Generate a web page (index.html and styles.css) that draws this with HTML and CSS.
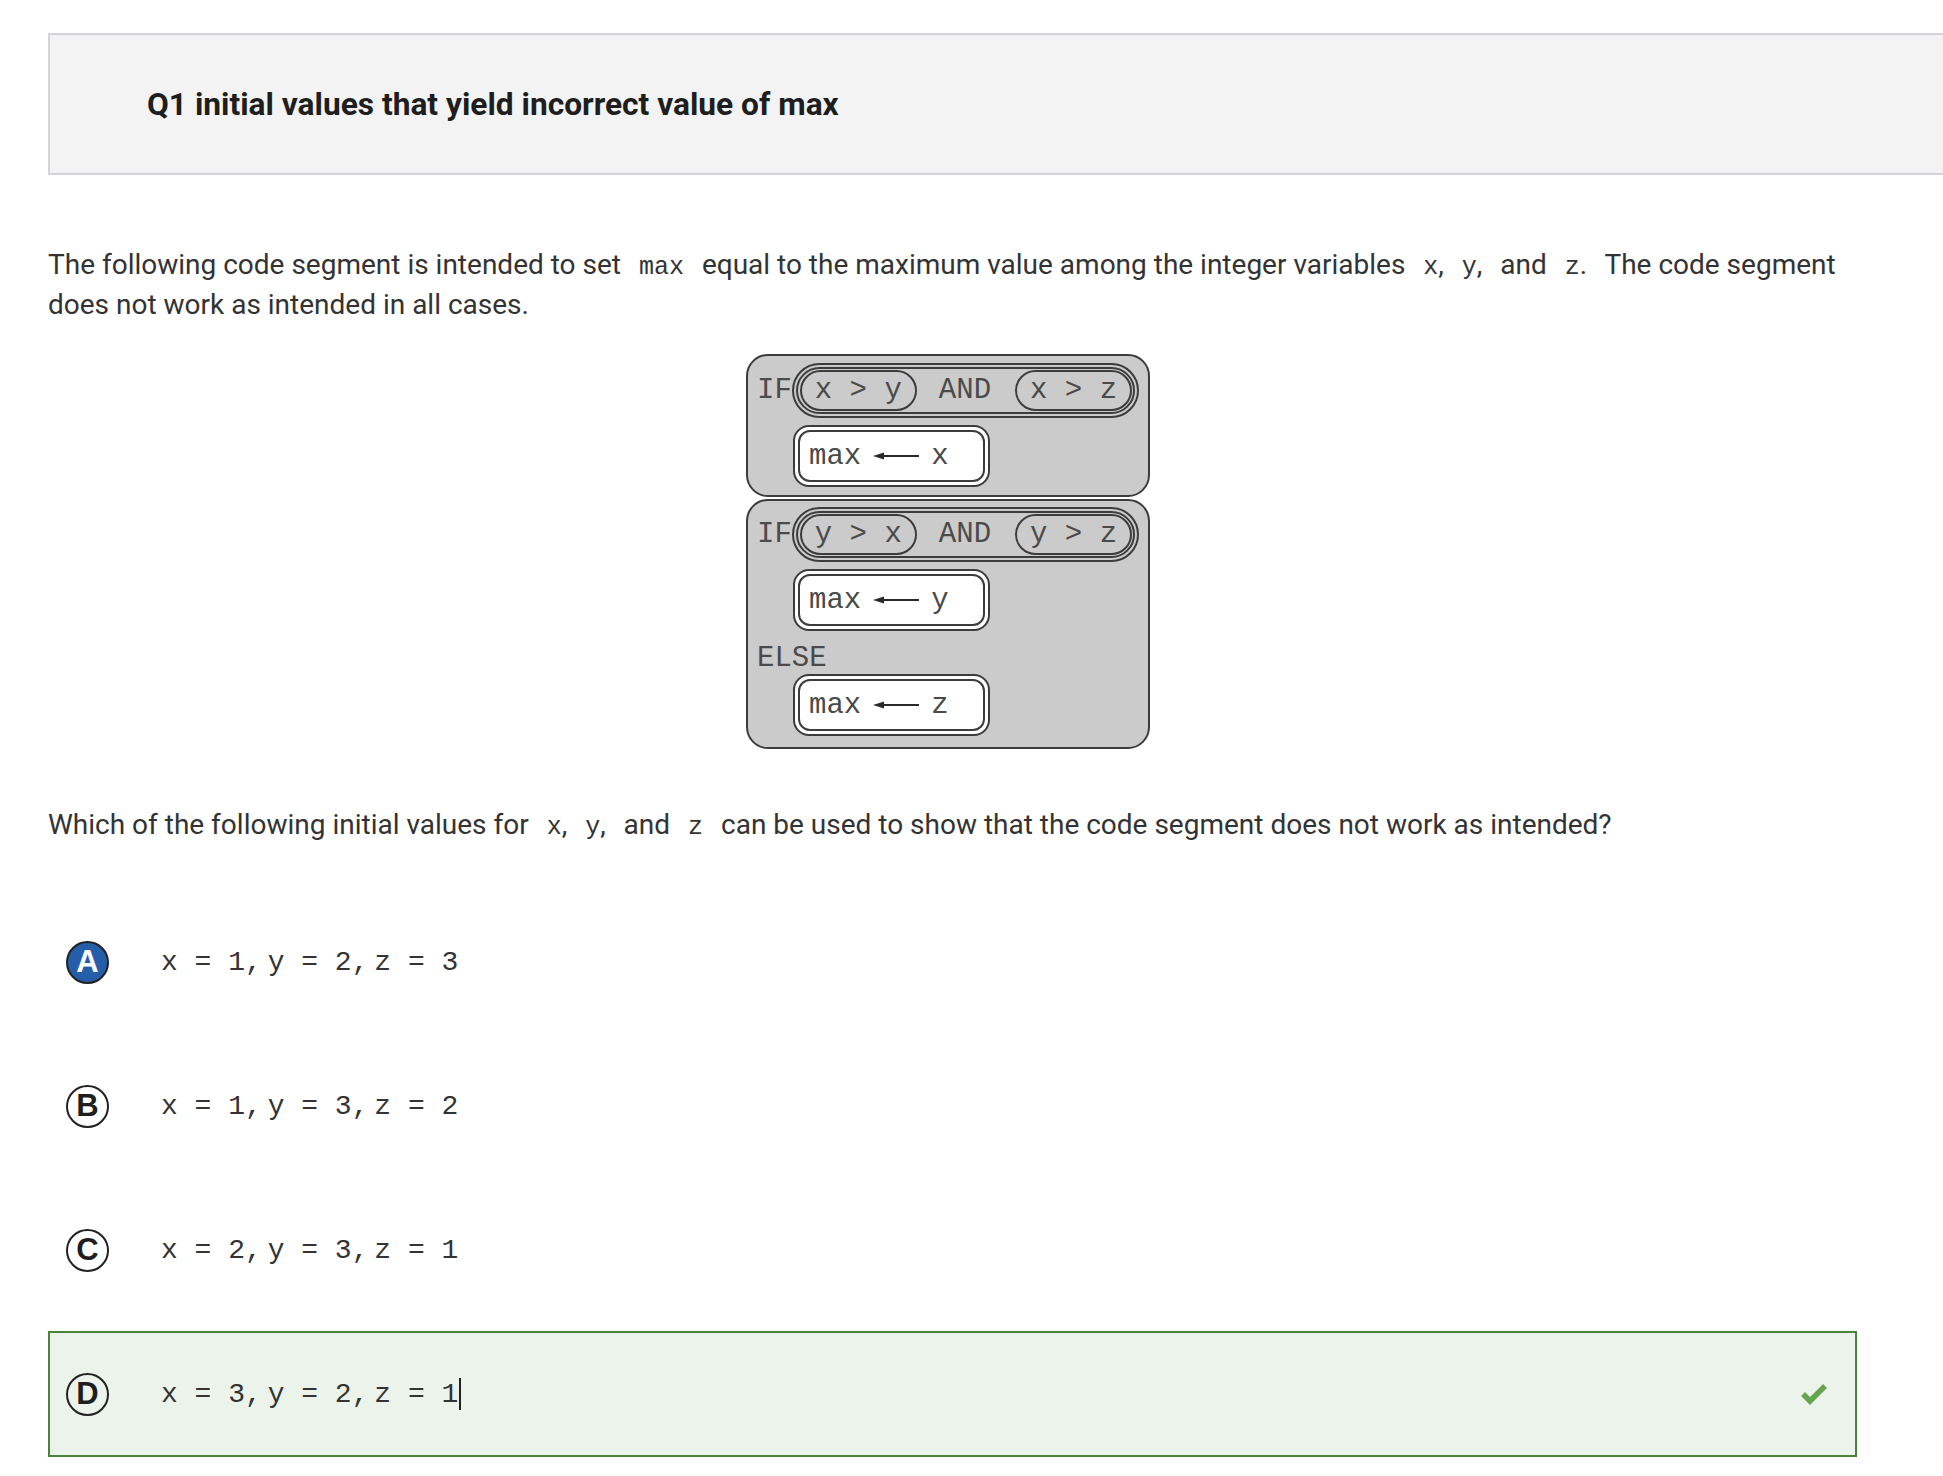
FILE: index.html
```html
<!DOCTYPE html>
<html>
<head>
<meta charset="utf-8">
<link rel="stylesheet" href="styles.css">
</head>
<body>
<header class="qhead">
  <h1 class="qtitle">Q1 initial values that yield incorrect value of max</h1>
</header>
<main class="content">
  <p class="para">The following code segment is intended to set <code class="code pr">max</code> equal to the maximum value among the integer variables <code class="code">x</code>, <code class="code">y</code>,<span class="gap"></span> and <code class="code">z</code>.<span class="gap"></span> The code segment does not work as intended in all cases.</p>

  <div class="diagram">
    <div class="dblock b1">
      <div class="ifrow">
        <span class="kw">IF</span>
        <div class="cond"><div class="cond-in">
          <span class="cmp">x &gt; y</span><span class="and">AND</span><span class="cmp">x &gt; z</span>
        </div></div>
      </div>
      <div class="assign"><div class="assign-in"><span>max</span><svg class="arrow" width="46" height="10" viewBox="0 0 46 10"><polygon points="0,5 11,1.5 11,8.5" fill="#2a2a2a"/><line x1="9" y1="5" x2="46" y2="5" stroke="#2a2a2a" stroke-width="2"/></svg><span>x</span></div></div>
    </div>
    <div class="dblock b2">
      <div class="ifrow">
        <span class="kw">IF</span>
        <div class="cond"><div class="cond-in">
          <span class="cmp">y &gt; x</span><span class="and">AND</span><span class="cmp">y &gt; z</span>
        </div></div>
      </div>
      <div class="assign"><div class="assign-in"><span>max</span><svg class="arrow" width="46" height="10" viewBox="0 0 46 10"><polygon points="0,5 11,1.5 11,8.5" fill="#2a2a2a"/><line x1="9" y1="5" x2="46" y2="5" stroke="#2a2a2a" stroke-width="2"/></svg><span>y</span></div></div>
      <div class="else">ELSE</div>
      <div class="assign tight"><div class="assign-in"><span>max</span><svg class="arrow" width="46" height="10" viewBox="0 0 46 10"><polygon points="0,5 11,1.5 11,8.5" fill="#2a2a2a"/><line x1="9" y1="5" x2="46" y2="5" stroke="#2a2a2a" stroke-width="2"/></svg><span>z</span></div></div>
    </div>
  </div>

  <p class="para q2">Which of the following initial values for <code class="code">x</code>, <code class="code">y</code>,<span class="gap"></span> and <code class="code pr">z</code> can be used to show that the code segment does not work as intended?</p>

  <ul class="options">
    <li class="opt">
      <span class="letter sel">A</span>
      <span class="val">x = 1<span class="cm">,</span> y = 2<span class="cm">,</span> z = 3</span>
    </li>
    <li class="opt">
      <span class="letter">B</span>
      <span class="val">x = 1<span class="cm">,</span> y = 3<span class="cm">,</span> z = 2</span>
    </li>
    <li class="opt">
      <span class="letter">C</span>
      <span class="val">x = 2<span class="cm">,</span> y = 3<span class="cm">,</span> z = 1</span>
    </li>
    <li class="opt correct">
      <span class="letter">D</span>
      <span class="val">x = 3<span class="cm">,</span> y = 2<span class="cm">,</span> z = 1<span class="caret"></span></span>
      <svg class="check" width="28" height="22" viewBox="0 0 28 22"><polyline points="3,11 10,18 25,3" fill="none" stroke="#67a44f" stroke-width="5.5"/></svg>
    </li>
  </ul>
</main>
</body>
</html>
```
FILE: styles.css
```css
html, body {
  margin: 0;
  padding: 0;
  background: #ffffff;
  overflow: hidden;
}
body {
  font-family: Roboto, "Liberation Sans", sans-serif;
  color: #333333;
}
.qhead {
  margin: 33px 0 0 48px;
  height: 142px;
  box-sizing: border-box;
  background: #f3f3f3;
  border: 2px solid #d4d4d8;
  border-right: none;
  display: flex;
  align-items: center;
  padding-left: 97px;
}
.qtitle {
  margin: 0;
  font-size: 31.7px;
  font-weight: 700;
  color: #1e1e1e;
}
.content {
  margin-left: 48px;
  width: 1809px;
}
.para {
  margin: 70px -24px 0 0;
  font-size: 28px;
  line-height: 40px;
  color: #333333;
}
.code {
  font-family: "Liberation Mono", "Courier New", monospace;
  font-size: 25px;
  line-height: 1;
  padding-left: 11px;
  color: #333;
}
.code.pr { padding-right: 11px; }
.gap {
  display: inline-block;
  width: 11px;
}

/* diagram */
.diagram {
  width: 404px;
  margin: 29px 0 0 698px;
  display: flex;
  flex-direction: column;
  gap: 2px;
  font-family: "Liberation Mono", "Courier New", monospace;
  font-size: 29px;
  color: #4a4a4a;
}
.dblock {
  background: #cbcbcb;
  border: 2px solid #3c3c3c;
  border-radius: 22px;
  padding: 7px 9px 8px 9px;
  display: flex;
  flex-direction: column;
}
.b2 { padding: 6px 9px 11px 9px; }
.ifrow {
  display: flex;
  align-items: center;
}
.kw {
  width: 36px;
  line-height: 30px;
}
.cond {
  border: 2px solid #3c3c3c;
  border-radius: 999px;
  padding: 2px;
}
.cond-in {
  border: 2px solid #3c3c3c;
  border-radius: 999px;
  padding: 1px 1px 1px 2px;
  display: flex;
  align-items: center;
}
.cmp {
  border: 2px solid #3c3c3c;
  border-radius: 999px;
  padding: 0 13px;
  line-height: 37px;
  white-space: pre;
}
.and {
  margin: 0 24px 0 22px;
}
.assign {
  margin: 7px 0 0 36px;
  width: 197px;
  box-sizing: border-box;
  border: 2px solid #3c3c3c;
  border-radius: 16px;
  background: #ffffff;
  padding: 3px;
}
.assign.tight { margin-top: 0; }
.assign-in {
  border: 2px solid #3c3c3c;
  border-radius: 12px;
  height: 52px;
  box-sizing: border-box;
  display: flex;
  align-items: center;
  padding-left: 9px;
}
.arrow {
  margin: 0 12px 0 12px;
}
.else {
  margin-top: 13px;
  line-height: 30px;
}

.q2 { margin-top: 56px; }

/* options */
.options {
  list-style: none;
  margin: 54px 0 0 0;
  padding: 0;
  display: flex;
  flex-direction: column;
  gap: 18px;
}
.opt {
  height: 126px;
  box-sizing: border-box;
  border: 2px solid transparent;
  display: flex;
  align-items: center;
  padding-left: 16px;
  padding-right: 27px;
}
.opt.correct {
  border-color: #4b833d;
  background: #ebf3eb;
}
.letter {
  width: 43px;
  height: 43px;
  box-sizing: border-box;
  border: 2px solid #222222;
  border-radius: 50%;
  display: flex;
  align-items: center;
  justify-content: center;
  font-family: "Liberation Sans", Arial, sans-serif;
  font-weight: 700;
  font-size: 31px;
  color: #1e1e1e;
  flex: none;
}
.letter.sel {
  background: #245da8;
  color: #ffffff;
}
.val {
  margin-left: 52px;
  font-family: "Liberation Mono", "Courier New", monospace;
  font-size: 28px;
  color: #333333;
  white-space: pre;
  display: flex;
  align-items: center;
}
.cm { letter-spacing: -11px; }
.caret {
  display: inline-block;
  width: 2px;
  height: 32px;
  background: #222;
  margin-left: 1px;
}
.check { margin-left: auto; }
```
